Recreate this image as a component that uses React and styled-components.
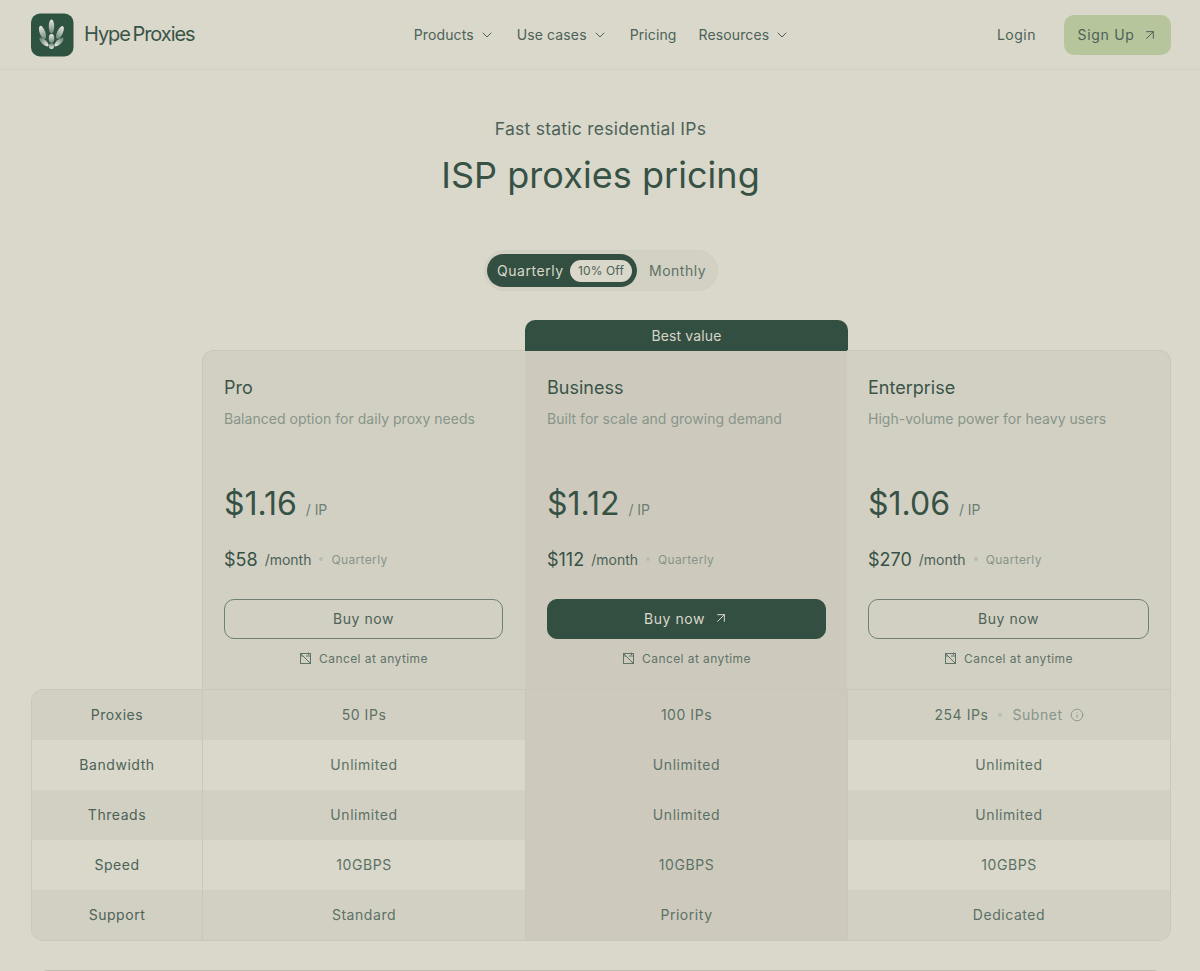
import React from 'react';
import styled, { createGlobalStyle } from 'styled-components';
import { ChevronDown, ArrowUpRight, Info } from 'lucide-react';

const GlobalStyle = createGlobalStyle`
  html, body {
    margin: 0;
    padding: 0;
    background: #dad8cb;
    height: 971px;
    overflow: hidden;
  }
  * { box-sizing: border-box; }
  body {
    font-family: Inter, "Liberation Sans", sans-serif;
    color: #334f42;
  }
`;

const Header = styled.header`
  height: 70px;
  padding: 0 29px 0 30px;
  border-bottom: 1px solid #d2d0c3;
  display: grid;
  grid-template-columns: 1fr auto 1fr;
  align-items: center;
`;

const Brand = styled.div`
  display: flex;
  align-items: center;
  gap: 10px;
`;

const BrandName = styled.span`
  font-size: 20px;
  font-weight: 400;
  letter-spacing: -1.05px;
  color: #3a5448;
  word-spacing: -2px;
  margin-top: -2px;
`;

const Nav = styled.nav`
  display: flex;
  align-items: center;
  gap: 22px;
  margin-right: -3px;
`;

const NavItem = styled.a`
  display: flex;
  align-items: center;
  gap: 5px;
  font-size: 14px;
  letter-spacing: 0.12px;
  color: #4c6257;
`;

const HeaderActions = styled.div`
  display: flex;
  justify-content: flex-end;
  align-items: center;
  gap: 28px;
`;

const Login = styled.a`
  font-size: 14px;
  letter-spacing: 0.5px;
  color: #4c6257;
`;

const SignUp = styled.a`
  width: 107px;
  height: 40px;
  border-radius: 10px;
  background: #b6c59c;
  color: #4c6257;
  font-size: 14px;
  letter-spacing: 0.7px;
  display: flex;
  align-items: center;
  justify-content: center;
  gap: 7px;
`;

const Hero = styled.section`
  text-align: center;
  padding-top: 48px;
`;

const Eyebrow = styled.p`
  margin: 0 0 0 1px;
  font-size: 17.5px;
  line-height: 22px;
  letter-spacing: 0.25px;
  color: #4c6257;
`;

const Title = styled.h1`
  margin: 14px 0 0 1px;
  font-size: 36px;
  line-height: 43px;
  font-weight: 400;
  letter-spacing: 0.05px;
  color: #375245;
`;

const ToggleRow = styled.div`
  display: flex;
  justify-content: center;
  margin-top: 53px;
`;

const Toggle = styled.div`
  height: 41px;
  width: 234px;
  margin-left: 2px;
  padding: 2px;
  border-radius: 21px;
  border: 1px solid #d0cec1;
  background: #d3d1c4;
  display: flex;
  align-items: center;
`;

const ToggleActive = styled.div`
  width: 150px;
  height: 33px;
  padding: 0 5px 0 10px;
  border-radius: 17px;
  background: #334f42;
  color: #dad8cb;
  font-size: 14px;
  letter-spacing: 0.55px;
  display: flex;
  align-items: center;
  justify-content: space-between;
`;

const Discount = styled.span`
  height: 22px;
  width: 62px;
  border-radius: 11px;
  background: #dad8cb;
  color: #4c6257;
  font-size: 12px;
  letter-spacing: 0.1px;
  display: flex;
  align-items: center;
  justify-content: center;
`;

const ToggleOption = styled.span`
  margin-left: 12px;
  font-size: 14px;
  letter-spacing: 0.5px;
  color: #5c7166;
`;

const Pricing = styled.section`
  margin: 59px 29px 0 31px;
`;

const PlanRow = styled.div`
  display: grid;
  grid-template-columns: 171px 323px 322px 324px;
`;

const PlanCard = styled.div`
  position: relative;
  height: 339px;
  padding: 26px ${(p) => (p.$last || p.$featured ? '21px' : '22px')} 0
    ${(p) => (p.$featured ? '22px' : '21px')};
  background: ${(p) => (p.$featured ? '#cdcabd' : '#d2d0c3')};
  border-top: 1px solid #c9c7ba;
  border-left: ${(p) => (p.$first ? '1px solid #c9c7ba' : 'none')};
  border-right: ${(p) => (p.$last ? '1px solid #c9c7ba' : 'none')};
  border-radius: ${(p) =>
    p.$first ? '12px 0 0 0' : p.$last ? '0 12px 0 0' : '0'};
`;

const BestValue = styled.div`
  position: absolute;
  left: 0;
  right: -1px;
  top: -31px;
  height: 31px;
  border-radius: 10px 10px 0 0;
  background: #334f42;
  color: #d6d5c7;
  font-size: 14px;
  letter-spacing: 0.15px;
  display: flex;
  align-items: center;
  justify-content: center;
`;

const PlanName = styled.h2`
  margin: 0;
  font-size: 18px;
  line-height: 21px;
  font-weight: 400;
  letter-spacing: 0;
  color: #3a5448;
`;

const PlanText = styled.p`
  margin: 11px 0 0;
  font-size: 14px;
  line-height: 20px;
  letter-spacing: 0.03px;
  color: #87958a;
`;

const PriceLine = styled.div`
  margin-top: 53px;
  height: 44px;
  display: flex;
  align-items: baseline;
  gap: 9px;
`;

const Price = styled.span`
  font-size: 32px;
  line-height: 44px;
  letter-spacing: 0;
  color: #375245;
`;

const PriceUnit = styled.span`
  font-size: 14px;
  letter-spacing: -0.1px;
  color: #6c7f73;
`;

const MonthLine = styled.div`
  margin-top: 21px;
  height: 24px;
  display: flex;
  align-items: center;
`;

const MonthPrice = styled.span`
  font-size: 18px;
  color: #375245;
`;

const MonthUnit = styled.span`
  margin-left: 7px;
  font-size: 14px;
  letter-spacing: 0;
  color: #4c6257;
`;

const Dot = styled.span`
  width: 4px;
  height: 4px;
  margin: 0 ${(p) => p.$gap || 8}px;
  border-radius: 50%;
  background: #b7bdb0;
  display: inline-block;
`;

const Period = styled.span`
  font-size: 12px;
  letter-spacing: 0.35px;
  color: #87958a;
`;

const BuyButton = styled.button`
  width: 100%;
  height: 40px;
  margin-top: 28px;
  padding: 0 0 2px;
  border-radius: 10px;
  border: 1px solid ${(p) => (p.$solid ? '#334f42' : '#6f8175')};
  background: ${(p) => (p.$solid ? '#334f42' : 'transparent')};
  color: ${(p) => (p.$solid ? '#dad8cb' : '#4c6257')};
  font-family: inherit;
  font-size: 14px;
  letter-spacing: 0.55px;
  display: flex;
  align-items: center;
  justify-content: center;
  gap: 8px;
`;

const CancelNote = styled.div`
  margin-top: 11px;
  height: 16px;
  display: flex;
  align-items: center;
  justify-content: center;
  gap: 7px;
  font-size: 12px;
  letter-spacing: 0.42px;
  color: #5f7368;
`;

const Table = styled.div`
  border: 1px solid #c9c7ba;
  border-radius: 12px 0 12px 12px;
  overflow: hidden;
`;

const Row = styled.div`
  display: grid;
  grid-template-columns: 170px 323px 322px 1fr;
  height: 50px;
  background: ${(p) => (p.$shaded ? '#d2d0c3' : '#d9d8ca')};
`;

const Cell = styled.div`
  display: flex;
  align-items: center;
  justify-content: center;
  padding-bottom: 1px;
  font-size: 14px;
  letter-spacing: 0.55px;
  color: ${(p) => (p.$label ? '#4c6257' : '#5c7166')};
  border-left: ${(p) => (p.$label ? 'none' : '1px solid #c9c7ba')};
  background: ${(p) => (p.$featured ? '#cdcabd' : 'transparent')};
`;

const Subnet = styled.span`
  display: flex;
  align-items: center;
  gap: 7px;
  color: #87958a;
`;

const NextSection = styled.div`
  margin: 29px 37px 0 38px;
  height: 20px;
  border-top: 1px solid #bdbcae;
  border-radius: 10px 10px 0 0;
`;

const LogoMark = () => (
  <svg width="44" height="44" viewBox="0 0 44 44">
    <defs>
      <linearGradient id="leaf" x1="0" y1="0" x2="0" y2="1">
        <stop offset="0" stopColor="#eceae0" />
        <stop offset="1" stopColor="#6f8a79" />
      </linearGradient>
      <linearGradient id="leafUp" x1="0" y1="1" x2="0" y2="0">
        <stop offset="0" stopColor="#f0eee5" />
        <stop offset="1" stopColor="#5f7f6c" />
      </linearGradient>
    </defs>
    <rect x="1" y="0.5" width="42.5" height="43" rx="9" fill="#2f5341" />
    <ellipse cx="21.5" cy="13.5" rx="2.7" ry="7" fill="url(#leaf)" />
    <ellipse cx="21.5" cy="25.5" rx="2.7" ry="4.4" fill="url(#leaf)" />
    <ellipse cx="21.5" cy="33" rx="2.6" ry="3" fill="url(#leafUp)" />
    <ellipse cx="12.5" cy="19.5" rx="2.8" ry="7" transform="rotate(-20 12.5 19.5)" fill="url(#leaf)" />
    <ellipse cx="30" cy="19.5" rx="2.8" ry="7" transform="rotate(25 30 19.5)" fill="url(#leaf)" />
    <ellipse cx="14" cy="29" rx="2.3" ry="6" transform="rotate(-47 14 29)" fill="url(#leafUp)" />
    <ellipse cx="29" cy="29" rx="2.3" ry="6" transform="rotate(47 29 29)" fill="url(#leafUp)" />
  </svg>
);

const NoCalendar = () => (
  <svg width="13" height="13" viewBox="0 0 13 13" fill="none" stroke="currentColor" strokeWidth="1">
    <rect x="1.5" y="1.5" width="10" height="10" />
    <path d="M1.5 1.5L11.5 11.5" />
    <path d="M1.5 4H4" />
    <path d="M7 4H11.5" />
    <path d="M9.5 0.5V3" />
  </svg>
);

const navItems = [
  { label: 'Products', menu: true },
  { label: 'Use cases', menu: true },
  { label: 'Pricing' },
  { label: 'Resources', menu: true },
];

const plans = [
  { name: 'Pro', text: 'Balanced option for daily proxy needs', price: '$1.16', month: '$58' },
  { name: 'Business', text: 'Built for scale and growing demand', price: '$1.12', month: '$112', featured: true },
  { name: 'Enterprise', text: 'High-volume power for heavy users', price: '$1.06', month: '$270' },
];

const rows = [
  { label: 'Proxies', values: ['50 IPs', '100 IPs', '254 IPs'], subnet: true },
  { label: 'Bandwidth', values: ['Unlimited', 'Unlimited', 'Unlimited'] },
  { label: 'Threads', values: ['Unlimited', 'Unlimited', 'Unlimited'] },
  { label: 'Speed', values: ['10GBPS', '10GBPS', '10GBPS'] },
  { label: 'Support', values: ['Standard', 'Priority', 'Dedicated'] },
];

const App = () => {
  return (
    <>
      <GlobalStyle />
      <Header>
        <Brand>
          <LogoMark />
          <BrandName>Hype Proxies</BrandName>
        </Brand>
        <Nav>
          {navItems.map((item) => (
            <NavItem key={item.label}>
              {item.label}
              {item.menu && <ChevronDown size={16} strokeWidth={1.5} />}
            </NavItem>
          ))}
        </Nav>
        <HeaderActions>
          <Login>Login</Login>
          <SignUp>
            Sign Up
            <ArrowUpRight size={16} strokeWidth={1.5} />
          </SignUp>
        </HeaderActions>
      </Header>

      <Hero>
        <Eyebrow>Fast static residential IPs</Eyebrow>
        <Title>ISP proxies pricing</Title>
        <ToggleRow>
          <Toggle>
            <ToggleActive>
              Quarterly
              <Discount>10% Off</Discount>
            </ToggleActive>
            <ToggleOption>Monthly</ToggleOption>
          </Toggle>
        </ToggleRow>
      </Hero>

      <Pricing>
        <PlanRow>
          <div />
          {plans.map((plan, index) => (
            <PlanCard
              key={plan.name}
              $featured={plan.featured}
              $first={index === 0}
              $last={index === plans.length - 1}
            >
              {plan.featured && <BestValue>Best value</BestValue>}
              <PlanName>{plan.name}</PlanName>
              <PlanText>{plan.text}</PlanText>
              <PriceLine>
                <Price>{plan.price}</Price>
                <PriceUnit>/ IP</PriceUnit>
              </PriceLine>
              <MonthLine>
                <MonthPrice>{plan.month}</MonthPrice>
                <MonthUnit>/month</MonthUnit>
                <Dot />
                <Period>Quarterly</Period>
              </MonthLine>
              <BuyButton $solid={plan.featured}>
                Buy now
                {plan.featured && <ArrowUpRight size={16} strokeWidth={1.5} />}
              </BuyButton>
              <CancelNote>
                <NoCalendar />
                Cancel at anytime
              </CancelNote>
            </PlanCard>
          ))}
        </PlanRow>
        <Table>
          {rows.map((row, index) => (
            <Row key={row.label} $shaded={index % 2 === 0}>
              <Cell $label>{row.label}</Cell>
              {row.values.map((value, col) => (
                <Cell key={col} $featured={col === 1}>
                  {value}
                  {row.subnet && col === 2 && (
                    <>
                      <Dot $gap={10} />
                      <Subnet>
                        Subnet
                        <Info size={14} strokeWidth={1.5} />
                      </Subnet>
                    </>
                  )}
                </Cell>
              ))}
            </Row>
          ))}
        </Table>
      </Pricing>
      <NextSection />
    </>
  );
};

export default App;
